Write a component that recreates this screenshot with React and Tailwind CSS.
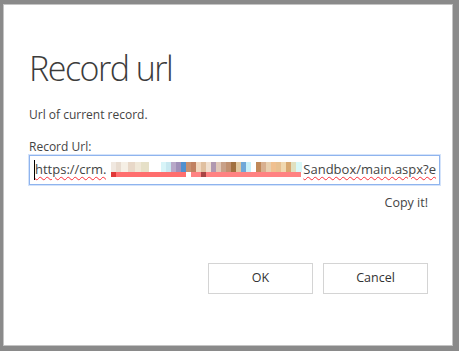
const blocks = [
  ['#f0e8e0', 5], ['#e8dcd0', 5], ['#f5efe5', 7], ['#e8d8c8', 7], ['#f0e8d8', 6], ['#e6e0c8', 8],
  ['#ffffff', 12], ['#d8f4f8', 5], ['#c8e8f0', 5], ['#b8a8c8', 5], ['#a090b8', 5], ['#5090d0', 5],
  ['#c89070', 5], ['#c08060', 5], ['#f0d8c0', 5], ['#e0c0a0', 5], ['#f0e0d0', 5], ['#b098b0', 5],
  ['#e0c8b8', 5], ['#c8a088', 5], ['#c09070', 5], ['#a07040', 5], ['#e0c8a0', 5], ['#70a8d8', 5],
  ['#c8f0f8', 5], ['#ffffff', 5], ['#c08858', 5], ['#d8b090', 5], ['#e8d0b0', 5], ['#f0c090', 5],
  ['#e8c090', 5], ['#f0d8b0', 5], ['#d8a870', 5], ['#e0e0c0', 5], ['#d8f8f8', 6],
]

function Pixelated() {
  return (
    <span className="relative z-10 -my-[3px] flex h-[30px] w-[197px] shrink-0 flex-col bg-white pt-[7px]">
      <span className="flex h-[10px] pl-[5px]">
        {blocks.map(([c, w], i) => (
          <span key={i} className="h-full" style={{ backgroundColor: c, width: w }} />
        ))}
      </span>
      <span className="flex h-[5px] pl-[5px]">
        <span className="h-full w-[5px] bg-[#e03838]" />
        <span className="h-full w-[70px] bg-[#ff6e6e]" />
        <span className="h-full w-[5px] bg-white" />
        <span className="h-full w-[10px] bg-[#ff8282]" />
        <span className="h-full w-[5px] bg-[#a84444]" />
        <span className="h-full w-[95px] bg-[#ff8282]" />
      </span>
    </span>
  )
}

export default function App() {
  return (
    <div className="h-[351px] w-[459px] overflow-hidden bg-[#8a8a8a] pl-[3px] pt-[4px] font-['Open_Sans',sans-serif] text-[#444444]">
      <div className="h-[342px] w-[450px] border border-[#c4c4c4] bg-white pl-[25px] pr-[14px]">
        {/* Title */}
        <h1 className="mt-[46px] text-[34px] font-light leading-none tracking-[-1.5px] text-[#3c3c3c]">Record url</h1>

        <p className="mt-[23px] text-[12px] leading-[14px]">Url of current record.</p>

        <label className="mt-[18px] block text-[12px] leading-[14px]">Record Url:</label>

        {/* Url field */}
        <div className="mt-[1px] flex h-[30px] w-[411px] items-center overflow-hidden border border-[#8fb4ee] pl-[4px] text-[13px] shadow-[0_0_0_1px_#d4e3fa]">
          <span className="h-[20px] w-px shrink-0 bg-black" />
          <span className="shrink-0 whitespace-nowrap underline decoration-red-500 decoration-wavy decoration-1 underline-offset-2">https://crm.</span>
          <Pixelated />
          <span className="whitespace-nowrap underline decoration-red-500 decoration-wavy decoration-1 underline-offset-2">Sandbox/main.aspx?e</span>
        </div>

        <div className="mt-[11px] flex justify-end pr-[10px]">
          <span className="text-[12.5px] leading-[14px]">Copy it!</span>
        </div>

        {/* Actions */}
        <div className="mt-[53px] flex justify-end gap-[10px] pr-[10px]">
          <button className="h-[31px] w-[105px] border border-[#d4d4d4] bg-white text-[12.5px] text-[#333]">OK</button>
          <button className="h-[31px] w-[105px] border border-[#d4d4d4] bg-white text-[12.5px] text-[#333]">Cancel</button>
        </div>
      </div>
    </div>
  )
}
